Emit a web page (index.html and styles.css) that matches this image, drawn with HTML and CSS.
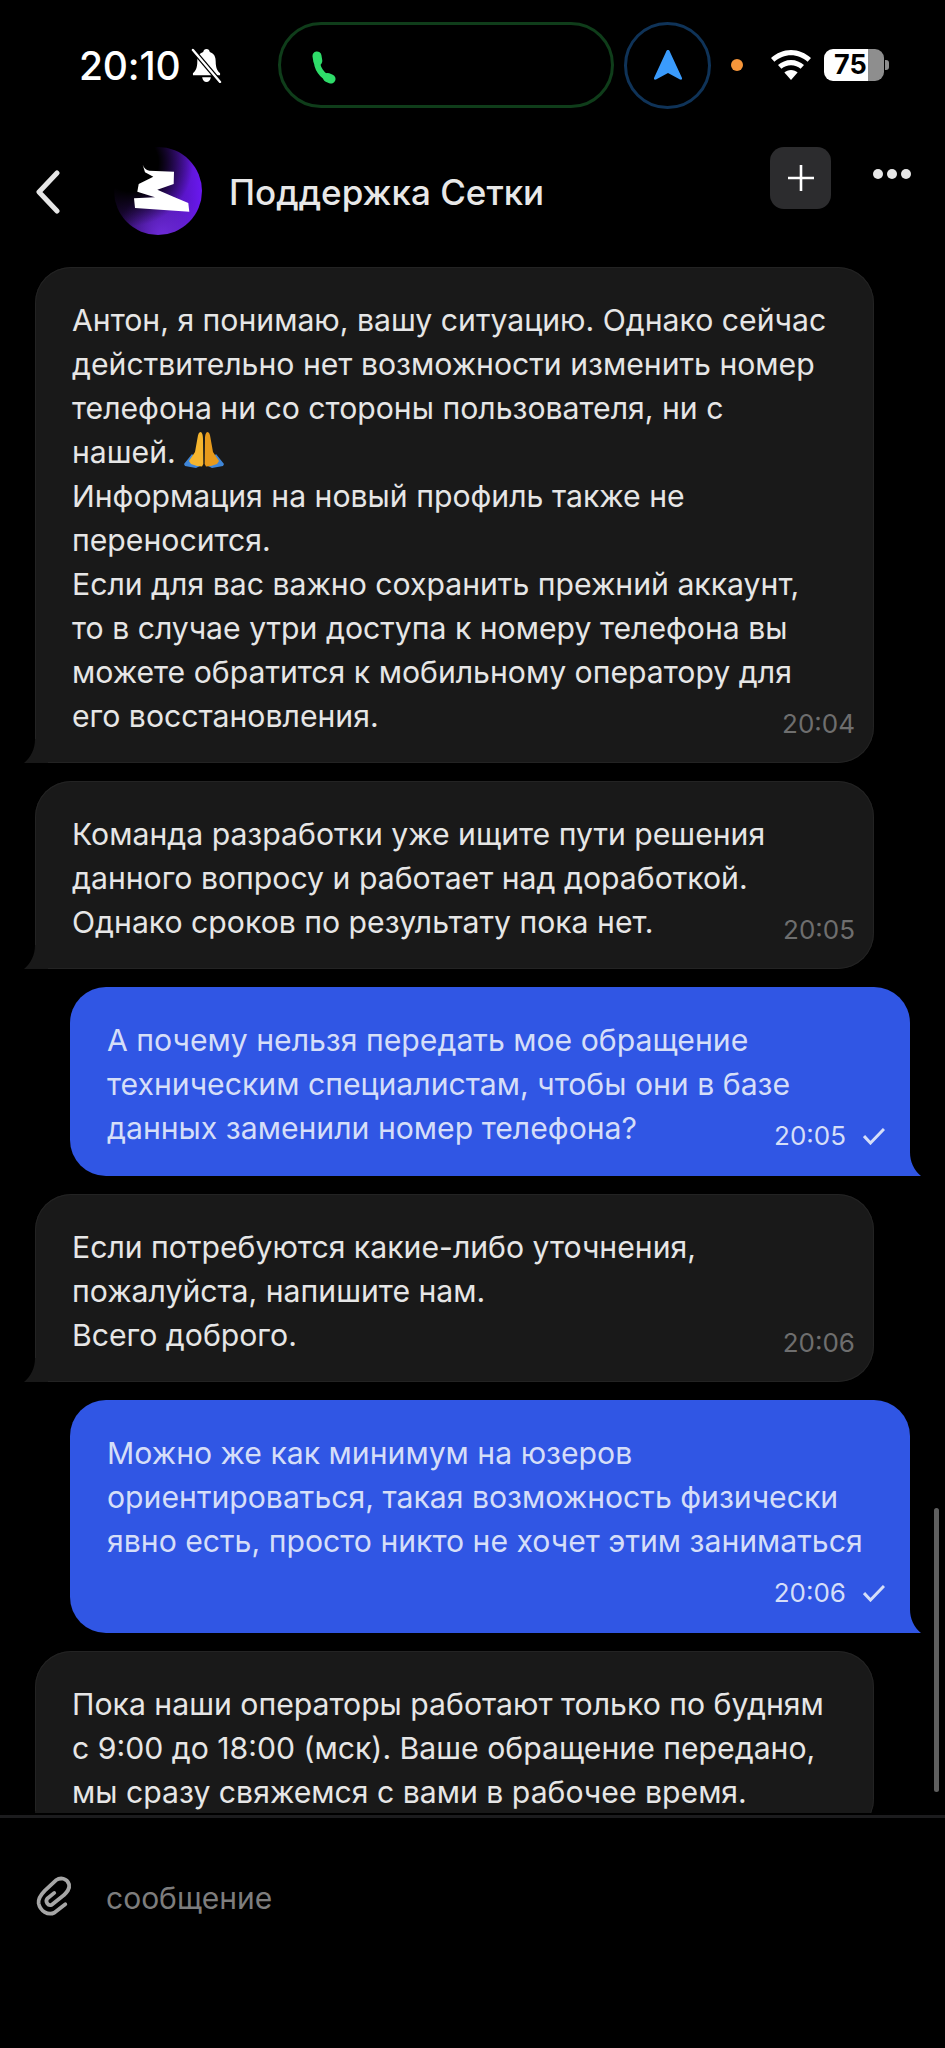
FILE: index.html
```html
<!DOCTYPE html>
<html lang="ru">
<head>
  <meta charset="UTF-8" />
  <title>Поддержка Сетки</title>
  <link rel="stylesheet" href="styles.css">
</head>
<body>
<div class="screen">
  <!-- STATUS BAR -->
  <div class="status">
    <span class="clock">20:10</span>
    <svg class="bell" viewBox="0 0 32 36"><path fill="#fff" d="M16 1c-2 0-3 1-3.400 3C8 5.500 6.500 9 6.500 14c0 6-1.500 9-4.500 12v2h28v-2c-3-3-4.500-6-4.500-12 0-5-1.500-8.500-6.100-10C19 2 18 1 16 1zM11.500 30c.5 3 2.200 5 4.500 5s4-2 4.500-5z"/><path stroke="#000" stroke-width="5" d="M2 2l28 33"/><path stroke="#fff" stroke-width="2.400" stroke-linecap="round" d="M2 2l28 33"/></svg>
    <div class="call-pill">
      <svg class="phone" viewBox="0 0 24 33"><path fill="none" stroke="#2fdc6a" stroke-width="6" stroke-linecap="round" d="M5 8C4 16 10 26 19 28"/><path fill="none" stroke="#2fdc6a" stroke-width="9" stroke-linecap="round" d="M5 5l.8 5M15.500 26.500l3.500 1.500"/></svg>
    </div>
    <div class="nav-circle">
      <svg class="arrow" viewBox="0 0 28 30"><path fill="#3a9bfc" d="M14 0c1 0 1.500 .6 2 2l12 26c.4 1.300-.6 2-2 1.500L14 23 2 29.500C.6 30-.4 29.300 0 28L12 2c.5-1.400 1-2 2-2z"/></svg>
    </div>
    <span class="mic-dot"></span>
    <svg class="wifi" viewBox="0 0 40 30"><path fill="#fff" d="M20 0c7.500 0 14.500 3 20 8l-3.400 3.800C32 7.800 26.200 5.300 20 5.300S8 7.800 3.400 11.800L0 8C5.500 3 12.500 0 20 0z"/><path fill="#fff" d="M20 10c5 0 9.500 2 13 5l-3.400 3.800C27 16.600 23.700 15.300 20 15.300s-7 1.300-9.600 3.500L7 15c3.500-3 8-5 13-5z"/><path fill="#fff" d="M20 20c2.600 0 5 1 6.600 2.400L20 30l-6.600-7.600C15 21 17.400 20 20 20z"/></svg>
    <div class="battery"><span class="battery-num">75</span></div>
    <span class="battery-tip"></span>
  </div>

  <!-- HEADER -->
  <header class="topbar">
    <svg class="back" viewBox="0 0 24 44"><path fill="none" stroke="#e6e6e6" stroke-width="5" stroke-linecap="round" stroke-linejoin="round" d="M21 3L3 22l18 19"/></svg>
    <div class="avatar">
      <svg viewBox="0 0 88 88"><path fill="#fff" d="M28.700 17.700C30 21 32 23 35.300 23.700L60 24.700 59.700 37 43.300 42.700 60 50 74.300 56 75.300 64.700 21 61 20 51.300 41 50.300 23.300 44.700 24.700 37 39.300 29.700 31 25.300z"/></svg>
    </div>
    <h1 class="title">Поддержка Сетки</h1>
    <button class="add"><svg viewBox="0 0 26 26"><path stroke="#fff" stroke-width="2.600" d="M13 0v26M0 13h26"/></svg></button>
    <div class="dots"><i></i><i></i><i></i></div>
  </header>

  <!-- MESSAGES -->
  <main class="chat">
    <div class="msg in">
      <p>Антон, я понимаю, вашу ситуацию. Однако сейчас действительно нет возможности изменить номер телефона ни со стороны пользователя, ни с нашей. <svg class="pray" viewBox="0 0 40 37"><path fill="#3f86d8" d="M8 23L0 33l1 2 11 2 6-3zM32 23l8 10-1 2-11 2-6-3z"/><path fill="#f5b52e" d="M19.300 33L19 8c0-4-1-7-2.500-7S14 3 13.500 7L11 21 5 30l2 3 6 2 5 .5z"/><path fill="#e79a1c" d="M20.700 33L21 8c0-4 1-7 2.500-7S26 3 26.500 7L29 21l6 9-2 3-6 2-5 .5z"/></svg></p>
      <p>Информация на новый профиль также не переносится.<br>Если для вас важно сохранить прежний аккаунт, то в случае утри доступа к номеру телефона вы можете обратится к мобильному оператору для его восстановления.</p>
      <div class="meta over"><span class="time">20:04</span></div>
    </div>
    <div class="msg in">
      <p>Команда разработки уже ищите пути решения данного вопросу и работает над доработкой. Однако сроков по результату пока нет.</p>
      <div class="meta over"><span class="time">20:05</span></div>
    </div>
    <div class="msg out">
      <p>А почему нельзя передать мое обращение техническим специалистам, чтобы они в базе данных заменили номер телефона?</p>
      <div class="meta over"><span class="time">20:05</span><svg class="check" viewBox="0 0 22 17"><path fill="none" stroke="#d5def8" stroke-width="3" d="M1 8l6.500 7L21 1"/></svg></div>
    </div>
    <div class="msg in">
      <p>Если потребуются какие-либо уточнения, пожалуйста, напишите нам.<br>Всего доброго.</p>
      <div class="meta over"><span class="time">20:06</span></div>
    </div>
    <div class="msg out">
      <p>Можно же как минимум на юзеров ориентироваться, такая возможность физически явно есть, просто никто не хочет этим заниматься</p>
      <div class="meta"><span class="time">20:06</span><svg class="check" viewBox="0 0 22 17"><path fill="none" stroke="#d5def8" stroke-width="3" d="M1 8l6.500 7L21 1"/></svg></div>
    </div>
    <div class="msg in">
      <p>Пока наши операторы работают только по будням с 9:00 до 18:00 (мск). Ваше обращение передано, мы сразу свяжемся с вами в рабочее время.</p>
    </div>
  </main>
  <div class="scrollbar"></div>

  <!-- COMPOSER -->
  <footer class="composer">
    <svg class="clip" viewBox="0 0 35 42"><path fill="none" stroke="#a6a6a6" stroke-width="4" stroke-linecap="round" stroke-linejoin="round" d="M30 29.700L18.300 38.700C11.700 42 3.300 37 1.700 28.700 1 23.700 5 18.700 8.300 15.300L20 4.300C25 1 31.700 2 34 8.700 35 13.700 31.700 17 28.300 20.300L15.700 30.300C11.700 32 8.300 27 11 23.700L18.300 17.700"/></svg>
    <span class="placeholder">сообщение</span>
  </footer>
</div>
</body>
</html>
```

FILE: styles.css
```css
*{box-sizing:border-box;font-family:Inter,"Liberation Sans",sans-serif}
body{margin:0;background:#000;color:#fff}
p{margin:0}
.screen{position:relative;width:945px;height:2048px;overflow:hidden;background:#000}

/* status bar */
.status{display:flex;align-items:center;height:86px;margin-top:22px;padding-left:79px}
.clock{width:102px;font-size:39px;font-weight:500;letter-spacing:-.2px}
.bell{width:31px;height:35px;margin-left:10px}
.call-pill{display:flex;align-items:center;width:336px;height:86px;margin-left:56px;padding:4px 0 0 31px;border:3px solid #0f3d1a;border-radius:43px}
.phone{width:24px;height:33px}
.nav-circle{display:flex;align-items:center;justify-content:center;width:87px;height:87px;margin-left:10px;border:3px solid #0f3358;border-radius:50%}
.arrow{width:28px;height:30px}
.mic-dot{width:12px;height:12px;margin-left:20px;background:#f7963a;border-radius:50%}
.wifi{width:40px;height:30px;margin-left:28px}
.battery{width:60px;height:32px;margin-left:13px;padding-left:10px;background:linear-gradient(90deg,#fff 44px,#8e8e8e 44px);border-radius:9px}
.battery-num{display:block;font-size:27px;line-height:32px;font-weight:700;color:#000}
.battery-tip{width:4px;height:10px;margin-left:1px;background:#8e8e8e;border-radius:0 3px 3px 0}

/* header */
.topbar{display:flex;align-items:flex-start;height:159px;padding:39px 0 0 36px}
.back{width:24px;height:44px;margin-top:23px}
.avatar{width:88px;height:88px;margin-left:54px;border-radius:50%;background:radial-gradient(circle at 18% 18%,#000 28%,transparent 62%),radial-gradient(circle at 55% 100%,#6d2bd8 0,transparent 45%),linear-gradient(90deg,#1a0833,#6a18f0);overflow:hidden}
.avatar svg{display:block;width:88px;height:88px}
.title{width:541px;margin:0 0 0 27px;padding-top:23px;font-size:35px;line-height:44px;font-weight:500;color:#e8e8e8}
.add{display:flex;align-items:center;justify-content:center;width:61px;height:62px;padding:0;border:none;border-radius:14px;background:#2c2c2e}
.add svg{width:26px;height:26px}
.dots{display:flex;gap:4px;margin:22px 0 0 42px}
.dots i{width:10px;height:10px;background:#e8e8e8;border-radius:50%}

/* messages */
.chat{display:flex;flex-direction:column;gap:18px;height:1546px;margin-bottom:2px;overflow:hidden}
.msg{position:relative;padding:31px 42px 21px 37px;font-size:30.2px;line-height:44px;flex:none}
.msg.in{width:839px;margin-left:35px;background:#191919;color:#e6e6e6;border-radius:36px 36px 36px 0;box-shadow:inset 0 0 0 1px #232323}
.msg.out{width:840px;margin-left:70px;padding-bottom:22px;background:#3056e4;color:#d5def8;border-radius:36px 36px 0 36px}
.msg.in::after,.msg.out::after{content:"";position:absolute;bottom:0;width:24px;height:24px}
.msg.in::after{left:-11px;background:#191919;clip-path:path("M11 0C11 10 7 18 0 24H24V0Z")}
.msg.out::after{right:-11px;background:#3056e4;clip-path:path("M13 0C13 10 17 18 24 24H0V0Z")}
.pray{width:40px;height:37px;vertical-align:-5px}
.meta{display:flex;justify-content:flex-end;align-items:center;gap:17px;margin:12px -23px 0 0;font-size:26px;line-height:36px}
.meta.over{margin-top:-32px}
.msg.in .time{color:#6e6e6e}
.msg.out .meta{margin-right:-17px}
.check{width:22px;height:17px}

.scrollbar{position:absolute;top:1508px;left:934px;width:5px;height:284px;background:#5f5f5f;border-radius:3px}

/* composer */
.composer{display:flex;align-items:center;height:159px;padding-left:37px;border-top:3px solid #1c1c1e}
.clip{width:33px;height:40px;overflow:visible}
.placeholder{margin:4px 0 0 36px;font-size:30px;color:#7d7d7d}
```
